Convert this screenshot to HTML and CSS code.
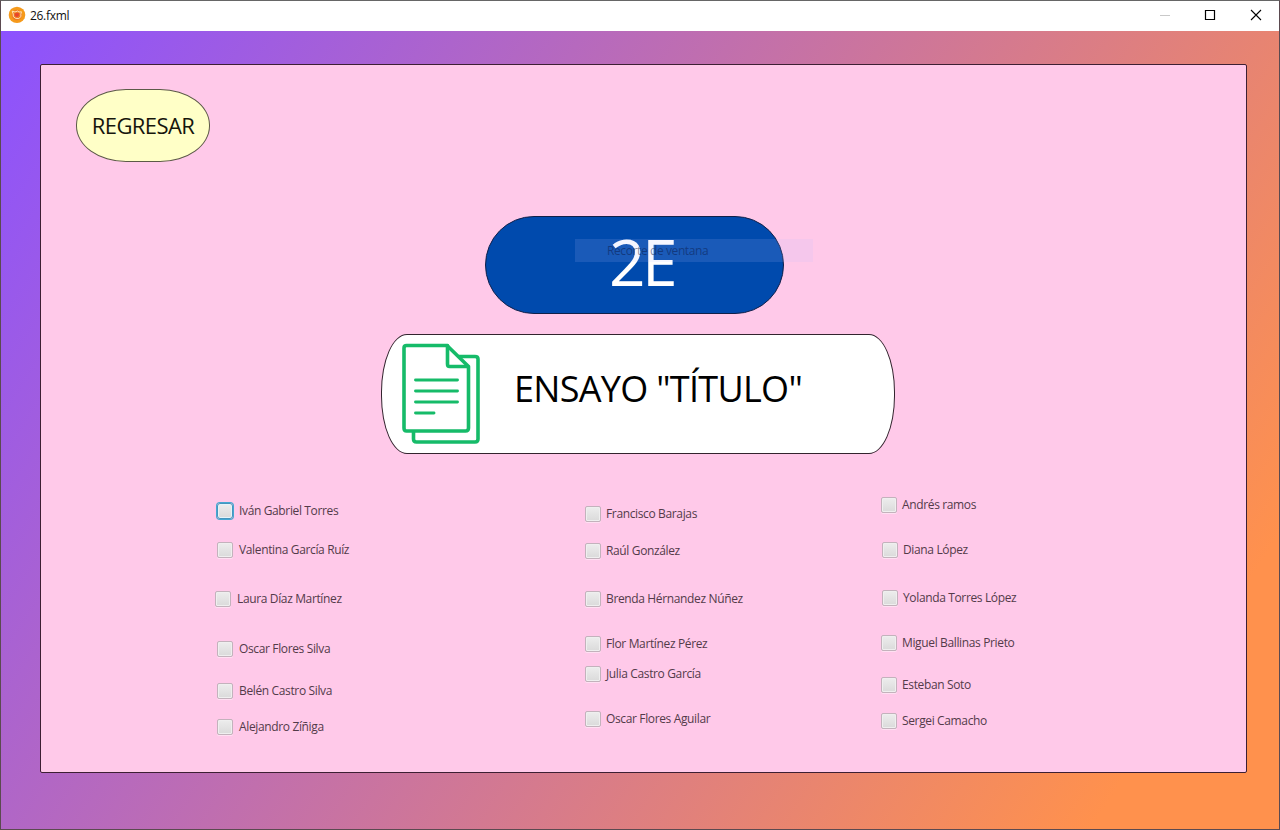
FILE: index.html
```html
<!DOCTYPE html>
<html lang="es">
<head>
<meta charset="utf-8">
<title>26.fxml</title>
<link rel="stylesheet" href="styles.css">
</head>
<body>
<div class="window">
  <header class="titlebar">
    <svg class="app-icon" width="18" height="18" viewBox="0 0 18 18">
      <path d="M9 .8 12.2 1.5 15 3.3 16.8 6 17.3 9 16.6 12.2 14.8 14.8 12 16.6 9 17.1 5.8 16.5 3 14.8 1.2 12 .7 9 1.3 5.8 3 3.1 5.8 1.4Z" fill="#f59a1b"/>
      <circle cx="8.8" cy="9" r="5.2" fill="#ee7a24"/>
      <path d="M4.2 5.2 7 6 9.5 5 11 6 13.4 5.8 12.8 8.5 13 10.5 10.8 12.5 7.6 12.3 5.3 10.5 5.2 8Z" fill="none" stroke="#fff0c8" stroke-width=".9"/>
      <path d="M7 7.3 10.8 7 11 9.6 8.8 11.2 6.8 9.6Z" fill="#e8432c"/>
    </svg>
    <span class="title">26.fxml</span>
    <svg class="controls" width="104" height="12" viewBox="0 0 104 12" fill="none">
      <path d="M0 6.5H10" stroke="#c9c9c9"/>
      <path d="M45.5 1.5H54.5V10.5H45.5Z" stroke="#000" stroke-width="1.2"/>
      <path d="M91 1 101 11M101 1 91 11" stroke="#000" stroke-width="1.1"/>
    </svg>
  </header>
  <main class="stage">
    <section class="panel">
      <button class="back">REGRESAR</button>
      <div class="group"><span>2E</span>
        <div class="ghost">Recorte de ventana</div>
      </div>
      <div class="card">
        <svg class="docs" width="80" height="102" viewBox="0 0 80 102" fill="none" stroke="#16bb69" stroke-width="3.6" stroke-linejoin="round" stroke-linecap="round">
          <path d="M12.5 90V97Q12.5 100 15.5 100H74Q77 100 77 97V17Q77 14.5 74 14.5H58"/>
          <path d="M5.500 3.500H46L67.500 24.500V86Q67.500 89 64.500 89H5.500Q3 89 3 86V6Q3 3.500 5.500 3.500Z"/>
          <path d="M46.500 3.500V22Q46.500 24.500 48.500 24.500H67"/>
          <path d="M14.500 38H56.500M14.500 49H56.500M14.500 60H56.500M14.500 71H33" stroke-width="2.9"/>
        </svg>
        <span class="card-title">ENSAYO "TÍTULO"</span>
      </div>
      <div class="students">
        <div class="col col-a">
          <label class="check focused"><i></i><span>Iván Gabriel Torres</span></label>
          <label class="check"><i></i><span>Valentina García Ruíz</span></label>
          <label class="check"><i></i><span>Laura Díaz Martínez</span></label>
          <label class="check"><i></i><span>Oscar Flores Silva</span></label>
          <label class="check"><i></i><span>Belén Castro Silva</span></label>
          <label class="check"><i></i><span>Alejandro Zíñiga</span></label>
        </div>
        <div class="col col-b">
          <label class="check"><i></i><span>Francisco Barajas</span></label>
          <label class="check"><i></i><span>Raúl González</span></label>
          <label class="check"><i></i><span>Brenda Hérnandez Núñez</span></label>
          <label class="check"><i></i><span>Flor Martínez Pérez</span></label>
          <label class="check"><i></i><span>Julia Castro García</span></label>
          <label class="check"><i></i><span>Oscar Flores Aguilar</span></label>
        </div>
        <div class="col col-c">
          <label class="check"><i></i><span>Andrés ramos</span></label>
          <label class="check"><i></i><span>Diana López</span></label>
          <label class="check"><i></i><span>Yolanda Torres López</span></label>
          <label class="check"><i></i><span>Miguel Ballinas Prieto</span></label>
          <label class="check"><i></i><span>Esteban Soto</span></label>
          <label class="check"><i></i><span>Sergei Camacho</span></label>
        </div>
      </div>
    </section>
  </main>
</div>
</body>
</html>
```
FILE: styles.css
```css
* { box-sizing: border-box; }
body { margin: 0; font-family: "Open Sans", "Noto Sans", sans-serif; }
.window {
  width: 1280px; height: 830px; overflow: hidden;
  border: 1px solid #5b4a50; border-top-color: #666;
  display: flex; flex-direction: column;
}
.titlebar {
  height: 30px; flex: none; background: #fff;
  display: flex; align-items: center; padding: 0 15px 2px 7px;
}
.app-icon { margin-right: 4px; }
.title { font-size: 12px; line-height: 16px; letter-spacing: -0.3px; color: #111; padding-top: 1px; }
.controls { margin-left: auto; }
.stage {
  flex: 1; padding: 33px 32px 56px 39px;
  background: linear-gradient(122.6deg, #8c52ff 0%, #ff914d 89.5%);
}
.panel {
  width: 1207px; height: 709px; background: #ffc9e9;
  border: 1px solid #3d1f33; border-radius: 2px;
  display: flex; flex-direction: column;
}
.back {
  width: 134px; height: 73px; margin: 24px 0 0 35px; padding: 0 0 1px;
  border: 1px solid #5c5a48; border-radius: 50px / 36px; background: #ffffc7;
  font: 22px/30px "Open Sans", sans-serif; letter-spacing: -0.6px; color: #16160c;
}
.group {
  position: relative; width: 299px; height: 98px; margin: 54px 0 0 444px;
  border: 1px solid #10204a; border-radius: 49px; background: #004aad;
  display: flex; align-items: center; justify-content: center;
  font-size: 64px; line-height: 80px; letter-spacing: -3.5px; color: #fff;
}
.group span { padding: 0 0 6px 14px; }
.ghost {
  position: absolute; left: 89px; top: 22px; width: 238px; height: 23px;
  padding-left: 32px; background: rgba(184, 190, 255, 0.14);
  font-size: 12px; line-height: 24px; letter-spacing: -0.4px; color: rgba(10, 25, 70, 0.5);
}
.card {
  width: 514px; height: 120px; margin: 20px 0 0 340px; padding-left: 19px;
  border: 1px solid #33242e; border-radius: 26px / 58px; background: #fff;
  display: flex; align-items: center;
}
.docs { margin-bottom: 2px; }
.card-title { margin-left: 33px; padding-bottom: 10px; font-size: 36px; line-height: 48px; letter-spacing: -0.7px; color: #000; }
.students { display: grid; grid-template-columns: 368px 296px 1fr; padding-left: 176px; }
.col { display: flex; flex-direction: column; }
.check { display: flex; align-items: center; gap: 5px; height: 16px; font-size: 12px; line-height: 16px; letter-spacing: -0.36px; color: #533b49; white-space: nowrap; }
.check i {
  width: 16px; height: 16px; border: 1px solid #c3b2bc; border-radius: 2px;
  background: linear-gradient(#ededed, #dadada);
  box-shadow: inset 0 0 0 1px #efefef, 0 1px 0 #ffe0f2;
}
.focused i { border-color: #4695bd; box-shadow: 0 0 0 1px #45a7d2, inset 0 0 0 1px #e4f4fa; border-radius: 3px; }
.col-a { padding-top: 49px; }
.col-a .check { gap: 6px; }
.col-a .check:nth-child(2) { margin-top: 23px; }
.col-a .check:nth-child(3) { margin: 33px 0 0 -2px; }
.col-a .check:nth-child(4) { margin-top: 34px; }
.col-a .check:nth-child(5) { margin-top: 26px; }
.col-a .check:nth-child(6) { margin-top: 20px; }
.col-b { padding-top: 52px; }
.col-b .check:nth-child(2) { margin-top: 21px; }
.col-b .check:nth-child(3) { margin-top: 32px; }
.col-b .check:nth-child(4) { margin-top: 29px; }
.col-b .check:nth-child(5) { margin-top: 14px; }
.col-b .check:nth-child(6) { margin-top: 29px; }
.col-c { padding-top: 43px; }
.col-c .check:nth-child(2) { margin: 29px 0 0 1px; }
.col-c .check:nth-child(3) { margin: 32px 0 0 1px; }
.col-c .check:nth-child(4) { margin-top: 29px; }
.col-c .check:nth-child(5) { margin-top: 26px; }
.col-c .check:nth-child(6) { margin-top: 20px; }
```
